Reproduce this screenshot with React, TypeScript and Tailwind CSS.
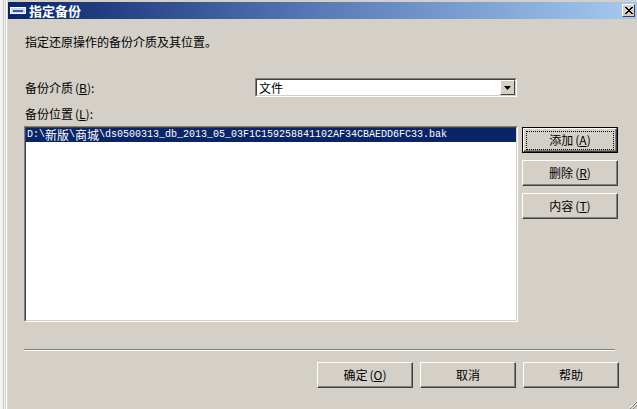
const cjk = { fontFamily: '"Noto Sans CJK SC", "Liberation Sans", sans-serif' };

function Button({ label, hot, isDefault }: { label: string; hot?: string; isDefault?: boolean }) {
  return (
    <div className={`h-[26px] w-[96px] ${isDefault ? "border border-black" : ""} bg-[#d4d0c8]`}>
      <div className="h-full w-full flex items-center justify-center border border-t-white border-l-white border-r-[#404040] border-b-[#404040] shadow-[inset_-1px_-1px_0_#808080]">
        <div
          className={`flex items-center justify-center ${isDefault ? "outline outline-1 outline-dotted outline-black w-[86px] h-[17px]" : ""}`}
        >
          <span className="text-[12px] leading-[14px] text-black" style={cjk}>
            {label}
            {hot && (
              <span className="ml-[2px]">
                (<span className="underline">{hot}</span>)
              </span>
            )}
          </span>
        </div>
      </div>
    </div>
  );
}

function App() {
  const mono = { fontFamily: '"Liberation Mono", monospace' };
  return (
    <div className="w-[637px] h-[409px] bg-[#d4d0c8] flex overflow-hidden" style={cjk}>
      {/* window frame strip on the left */}
      <div className="w-[8px] h-full flex bg-[#f3f3f3]">
        <div className="w-[3px]" />
        <div className="w-[1px] bg-[#c8c8c8]" />
        <div className="w-[1px] bg-[#f3f3f3]" />
        <div className="w-[1px] bg-[#d0d0d0]" />
        <div className="w-[1px] bg-white" />
        <div className="w-[1px] bg-[#dcd4c8]" />
      </div>

      <div className="flex-1 flex flex-col relative">
        <div className="h-[2px] bg-[#d4d0c8]" />
        {/* title bar */}
        <div className="h-[17px] flex items-center bg-gradient-to-r from-[#0a246a] via-[#5a7ab8] to-[#a6caf0] pr-[2px]">
          <div className="ml-[2px] w-[16px] h-[7px] bg-[#cdd6ea] border border-white flex items-center">
            <div className="mx-[2px] h-[2px] flex-1 bg-[#3a5ea8]" />
          </div>
          <span className="ml-[3px] text-[13px] font-bold text-white leading-[16px]">指定备份</span>
          <div className="ml-auto w-[13px] h-[13px] bg-[#d4d0c8] border border-t-white border-l-white border-r-[#404040] border-b-[#404040] flex items-center justify-center">
            <svg width="8" height="7" viewBox="0 0 8 7">
              <path d="M0 0 L7 7 M1 0 L8 7 M7 0 L0 7 M8 0 L1 7" stroke="black" strokeWidth="1" />
            </svg>
          </div>
        </div>

        <div className="flex-1 flex flex-col pl-[16px]">
          <div className="mt-[15px] text-[12px] leading-[16px] text-black pl-[1px]">指定还原操作的备份介质及其位置。</div>

          <div className="mt-[28px] flex items-center">
            <div className="w-[231px] text-[12px] leading-[16px] text-black pl-[1px]">
              备份介质<span className="ml-[2px]">(<span className="underline">B</span>):</span>
            </div>
            <div className="w-[262px] h-[19px] border border-t-[#808080] border-l-[#808080] border-r-white border-b-white">
              <div className="h-full flex bg-white border border-t-[#404040] border-l-[#404040] border-r-[#d4d0c8] border-b-[#d4d0c8]">
                <span className="pl-[2px] text-[12px] leading-[15px] text-black">文件</span>
                <div className="ml-auto w-[15px] h-full bg-[#d4d0c8] border border-t-white border-l-white border-r-[#404040] border-b-[#404040] flex items-center justify-center">
                  <svg width="7" height="4" viewBox="0 0 7 4">
                    <path d="M0 0 H7 L3.5 4 Z" fill="black" />
                  </svg>
                </div>
              </div>
            </div>
          </div>

          <div className="mt-[9px] text-[12px] leading-[16px] text-black pl-[1px]">
            备份位置<span className="ml-[2px]">(<span className="underline">L</span>):</span>
          </div>

          <div className="mt-[4px] flex items-start gap-[4px]">
            <div className="w-[494px] h-[196px] border border-t-[#808080] border-l-[#808080] border-r-white border-b-white">
              <div className="h-full bg-white border border-t-[#404040] border-l-[#404040] border-r-[#d4d0c8] border-b-[#d4d0c8]">
                <div className="h-[14px] bg-[#0a246a] text-white flex items-center whitespace-nowrap pl-[1px]">
                  <span className="text-[10px] leading-[14px]" style={mono}>D:\</span>
                  <span className="text-[12px] leading-[14px]">新版</span>
                  <span className="text-[10px] leading-[14px]" style={mono}>\</span>
                  <span className="text-[12px] leading-[14px]">商城</span>
                  <span className="text-[10px] leading-[14px]" style={mono}>
                    \ds0500313_db_2013_05_03F1C159258841102AF34CBAEDD6FC33.bak
                  </span>
                </div>
              </div>
            </div>
            <div className="flex flex-col gap-[7px] pt-[1px]">
              <Button label="添加" hot="A" isDefault />
              <Button label="删除" hot="R" />
              <Button label="内容" hot="T" />
            </div>
          </div>

          <div className="mt-[27px] w-[591px] h-[2px] flex flex-col">
            <div className="h-[1px] bg-[#808080]" />
            <div className="h-[1px] bg-white" />
          </div>

          <div className="mt-[11px] flex gap-[7px] pl-[293px]">
            <Button label="确定" hot="O" />
            <Button label="取消" />
            <Button label="帮助" />
          </div>
        </div>

        {/* resize grip */}
        <svg className="absolute right-0 bottom-0" width="10" height="10" viewBox="0 0 10 10">
          <path d="M9 3 L3 9 M9 6 L6 9" stroke="white" strokeWidth="1" />
          <path d="M10 3 L3 10 M10 6 L6 10" stroke="#808080" strokeWidth="1" />
        </svg>
      </div>
    </div>
  );
}

export default App;
